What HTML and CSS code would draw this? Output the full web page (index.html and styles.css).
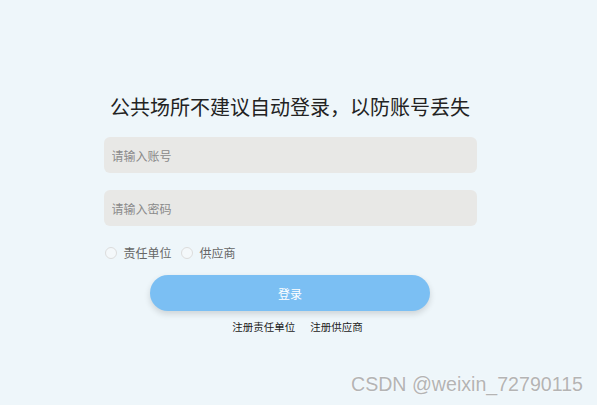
FILE: index.html
```html
<!DOCTYPE html>
<html lang="zh-CN">
<head>
<meta charset="utf-8">
<link rel="stylesheet" href="styles.css">
</head>
<body>
<div class="page">
  <form class="login">
    <h1 class="title">公共场所不建议自动登录，以防账号丢失</h1>
    <input class="field" type="text" placeholder="请输入账号">
    <input class="field field-gap" type="password" placeholder="请输入密码">
    <div class="roles">
      <label class="role"><span class="dot"></span><span>责任单位</span></label>
      <label class="role"><span class="dot"></span><span>供应商</span></label>
    </div>
    <button class="submit" type="button">登录</button>
    <div class="links">
      <a class="link">注册责任单位</a>
      <a class="link">注册供应商</a>
    </div>
  </form>
  <div class="mark">CSDN @weixin_72790115</div>
</div>
</body>
</html>
```
FILE: styles.css
```css
html, body {
  margin: 0;
  padding: 0;
  background: #eef6fa;
  height: 100%;
  overflow: hidden;
}
body {
  font-family: "Noto Sans CJK SC", "Noto Sans", sans-serif;
}
.page {
  position: relative;
  width: 580px;
  height: 405px;
}
.login {
  width: 373px;
  margin: 0 auto;
  padding-top: 93px;
  display: flex;
  flex-direction: column;
}
.title {
  margin: 0;
  font-size: 20px;
  line-height: 28px;
  font-weight: 400;
  color: #222;
  text-align: center;
  letter-spacing: 0;
}
.field {
  margin: 16px 0 0;
  box-sizing: border-box;
  height: 36px;
  border: none;
  border-radius: 6px;
  background: #e8e8e6;
  padding: 0 8px;
  font-family: inherit;
  font-size: 12px;
  outline: none;
}
.field::placeholder {
  color: #8a8a8a;
}
.field-gap {
  margin-top: 17px;
}
.roles {
  margin-top: 19px;
  height: 16px;
  display: flex;
  align-items: center;
  gap: 9px;
  padding-left: 1px;
}
.role {
  display: flex;
  align-items: center;
  gap: 7px;
  font-size: 12px;
  color: #666;
  line-height: 16px;
}
.dot {
  width: 10px;
  height: 10px;
  border: 1px solid #dcdcdc;
  border-radius: 50%;
  background: #f4f8fa;
}
.submit {
  margin: 14px auto 0;
  width: 280px;
  height: 36px;
  border: none;
  border-radius: 18px;
  background: #7bbff3;
  color: #fff;
  font-family: inherit;
  font-size: 12px;
  box-shadow: 0 3px 6px rgba(0, 0, 0, 0.14);
}
.links {
  margin-top: 8px;
  display: flex;
  justify-content: center;
  gap: 15px;
  padding-left: 15px;
  line-height: 16px;
}
.link {
  font-size: 10.5px;
  color: #222;
}
.mark {
  position: absolute;
  left: 351px;
  top: 373px;
  font-family: "Liberation Sans", Arial, sans-serif;
  font-size: 19.6px;
  line-height: 22px;
  color: #b4b4b4;
  text-shadow: 0 0 2px #fff;
  white-space: nowrap;
}
```
